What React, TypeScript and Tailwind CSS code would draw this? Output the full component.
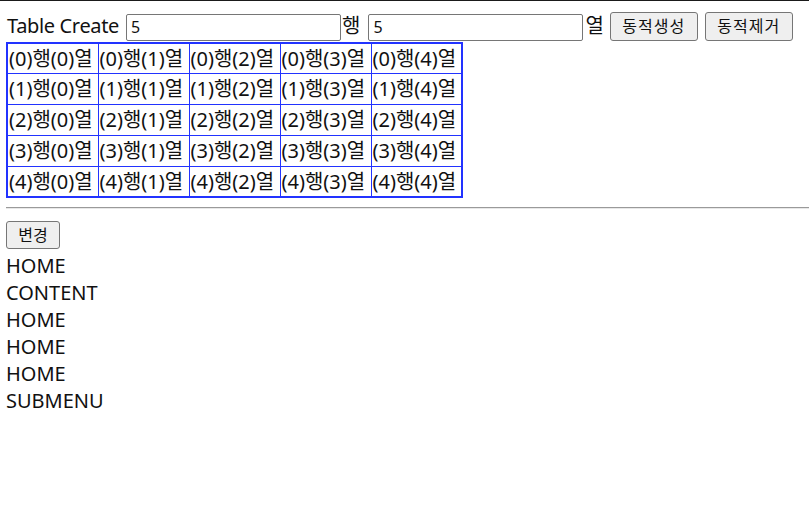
import React from "react";

export default function App() {
  const rows = [0, 1, 2, 3, 4];
  const cols = [0, 1, 2, 3, 4];
  return (
    <div
      className="w-[809px] h-[510px] bg-white border-t border-[#1a1a1a] text-[20px] leading-[27px] text-[#111] overflow-hidden"
      style={{ fontFamily: '"Noto Sans","Noto Sans CJK KR",sans-serif' }}
    >
      <div className="pl-[6px]">
        <div className="flex items-start h-[41px] pt-[11px]">
          <span className="ml-[1px] h-[27px] tracking-[-0.35px]">Table Create</span>
          <div className="ml-[7px] mt-[2px] w-[215px] h-[27px] border border-[#767676] rounded-[2px] pl-[4px] flex items-center text-[16px]">
            5
          </div>
          <span className="ml-[1px]">행</span>
          <div className="ml-[8px] mt-[2px] w-[215px] h-[27px] border border-[#767676] rounded-[2px] pl-[4px] flex items-center text-[16px]">
            5
          </div>
          <span className="ml-[2px]">열</span>
          <button className="ml-[6px] w-[88px] h-[29px] bg-[#efefef] border border-[#767676] rounded-[3px] text-[16px] leading-[27px] tracking-[1px]">
            동적생성
          </button>
          <button className="ml-[7px] w-[88px] h-[29px] bg-[#efefef] border border-[#767676] rounded-[3px] text-[16px] leading-[27px] tracking-[1px]">
            동적제거
          </button>
        </div>
        <table className="border-collapse border-2 border-[#2233ff]">
          <tbody>
            {rows.map((r) => (
              <tr key={r}>
                {cols.map((c) => (
                  <td
                    key={c}
                    className={`border border-[#2233ff] w-[91px] ${r === 0 ? "h-[30px]" : "h-[31px]"} p-0 pl-[1px] whitespace-nowrap leading-[27px]`}
                  >
                    ({r})행({c})열
                  </td>
                ))}
              </tr>
            ))}
          </tbody>
        </table>
        <div className="mt-[9px] border-t border-[#9a9a9a] border-b border-b-[#e8e8e8] h-[2px]" />
        <button className="mt-[12px] w-[54px] h-[28px] bg-[#efefef] border border-[#767676] rounded-[3px] text-[16px] leading-[26px] block">
          변경
        </button>
        <div className="mt-[3px]">HOME</div>
        <div>CONTENT</div>
        <div>HOME</div>
        <div>HOME</div>
        <div>HOME</div>
        <div>SUBMENU</div>
      </div>
    </div>
  );
}
